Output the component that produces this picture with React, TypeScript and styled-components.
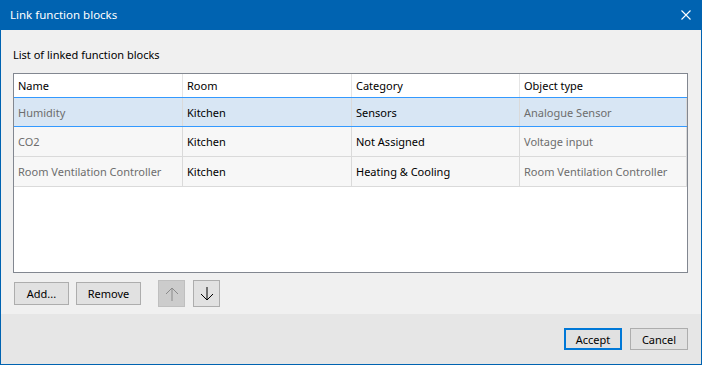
import React, { useState } from "react";
import styled, { createGlobalStyle } from "styled-components";

const GlobalStyle = createGlobalStyle`
  html, body {
    margin: 0;
    padding: 0;
    background: #ffffff;
  }
  body {
    font-family: "Noto Sans", "Open Sans", sans-serif;
    font-size: 11px;
  }
`;

type Block = {
  name: string;
  room: string;
  category: string;
  objectType: string;
};

const blocks: Block[] = [
  { name: "Humidity", room: "Kitchen", category: "Sensors", objectType: "Analogue Sensor" },
  { name: "CO2", room: "Kitchen", category: "Not Assigned", objectType: "Voltage input" },
  {
    name: "Room Ventilation Controller",
    room: "Kitchen",
    category: "Heating & Cooling",
    objectType: "Room Ventilation Controller",
  },
];

const columns = ["Name", "Room", "Category", "Object type"];

const App = () => {
  const [selected, setSelected] = useState<number>(0);

  return (
    <>
      <GlobalStyle />
      <Window>
        <TitleBar>
          <Title>Link function blocks</Title>
          <CloseBtn aria-label="Close">
            <svg width="10" height="10" viewBox="0 0 10 10">
              <path d="M0.5 0.5 L9.5 9.5 M9.5 0.5 L0.5 9.5" stroke="#ffffff" strokeWidth="1.1" />
            </svg>
          </CloseBtn>
        </TitleBar>
        <Body>
          <Label>List of linked function blocks</Label>
          <Table>
            <HeaderRow>
              {columns.map((c) => (
                <HeaderCell key={c}>{c}</HeaderCell>
              ))}
            </HeaderRow>
            {blocks.map((b, i) => (
              <Row key={b.name} selected={i === selected} onClick={() => setSelected(i)}>
                <Cell muted>{b.name}</Cell>
                <Cell>{b.room}</Cell>
                <Cell>{b.category}</Cell>
                <Cell muted>{b.objectType}</Cell>
              </Row>
            ))}
          </Table>
          <Toolbar>
            <TextBtn width={55}>Add...</TextBtn>
            <TextBtn width={65}>Remove</TextBtn>
            <ArrowGroup>
              <ArrowBtn disabled>
                <svg width="14" height="14" viewBox="0 0 14 14">
                  <path d="M7 1 V14 M1 7 L7 1 L13 7" stroke="#8a8a8a" strokeWidth="1" fill="none" />
                </svg>
              </ArrowBtn>
              <ArrowBtn>
                <svg width="14" height="14" viewBox="0 0 14 14">
                  <path d="M7 0 V13 M1 7 L7 13 L13 7" stroke="#000000" strokeWidth="1" fill="none" />
                </svg>
              </ArrowBtn>
            </ArrowGroup>
          </Toolbar>
        </Body>
        <Footer>
          <DialogBtn primary>Accept</DialogBtn>
          <DialogBtn>Cancel</DialogBtn>
        </Footer>
      </Window>
    </>
  );
};

const Window = styled.div`
  display: flex;
  flex-direction: column;
  width: 702px;
  height: 365px;
  box-sizing: border-box;
  border: 1px solid #0063b1;
  border-top: none;
  background: #f0f0f0;
  overflow: hidden;
`;

const TitleBar = styled.div`
  display: flex;
  align-items: center;
  justify-content: space-between;
  margin: 0 -1px;
  padding: 0 11px 0 10px;
  height: 30px;
  background: #0063b1;
  color: #ffffff;
`;

const Title = styled.div`
  font-size: 11.5px;
  line-height: 16px;
`;

const CloseBtn = styled.div`
  display: flex;
  align-items: center;
  justify-content: center;
  width: 10px;
  height: 10px;
`;

const Body = styled.div`
  display: flex;
  flex-direction: column;
  padding: 17px 13px 7px 12px;
`;

const Label = styled.div`
  height: 16px;
  line-height: 16px;
  color: #000000;
`;

const Table = styled.div`
  margin-top: 10px;
  height: 200px;
  box-sizing: border-box;
  border: 1px solid #828790;
  background: #ffffff;
`;

const gridCols = "169px 169px 168px 167px";

const HeaderRow = styled.div`
  display: grid;
  grid-template-columns: ${gridCols};
  height: 23px;
`;

const HeaderCell = styled.div`
  display: flex;
  align-items: center;
  padding-left: 4px;
  border-right: 1px solid #e5e5e5;
  color: #000000;
  &:last-child {
    border-right: none;
  }
`;

const Row = styled.div<{ selected?: boolean }>`
  display: grid;
  grid-template-columns: ${gridCols};
  height: 30px;
  box-sizing: border-box;
  border-top: ${(p) => (p.selected ? "1px solid #3399ff" : "none")};
  border-bottom: 1px solid ${(p) => (p.selected ? "#3399ff" : "#dadada")};
  background: ${(p) => (p.selected ? "#d8e6f4" : "#f7f7f7")};
`;

const Cell = styled.div<{ muted?: boolean }>`
  display: flex;
  align-items: center;
  padding-left: 4px;
  border-right: 1px solid #dadada;
  color: ${(p) => (p.muted ? "#6d6d6d" : "#000000")};
  white-space: nowrap;
  overflow: hidden;
`;

const Toolbar = styled.div`
  display: flex;
  align-items: center;
  gap: 7px;
  margin-top: 7px;
  padding-left: 1px;
  height: 27px;
`;

const TextBtn = styled.button<{ width: number }>`
  width: ${(p) => p.width}px;
  height: 23px;
  padding: 0;
  box-sizing: border-box;
  border: 1px solid #adadad;
  background: #e1e1e1;
  font-family: inherit;
  font-size: 11px;
  color: #000000;
`;

const ArrowGroup = styled.div`
  display: flex;
  gap: 8px;
  margin-left: 10px;
`;

const ArrowBtn = styled.button`
  display: flex;
  align-items: center;
  justify-content: center;
  width: 27px;
  height: 27px;
  padding: 0;
  box-sizing: border-box;
  border: 1px solid #adadad;
  background: #e1e1e1;
  &:disabled {
    border-color: #bfbfbf;
    background: #cccccc;
  }
`;

const Footer = styled.div`
  display: flex;
  justify-content: flex-end;
  gap: 8px;
  margin-top: auto;
  padding: 14px 13px 0 0;
  height: 50px;
  box-sizing: border-box;
  background: #e6e6e6;
`;

const DialogBtn = styled.button<{ primary?: boolean }>`
  width: 58px;
  height: 22px;
  padding: 0;
  box-sizing: border-box;
  border: ${(p) => (p.primary ? "2px solid #0078d7" : "1px solid #adadad")};
  background: #e1e1e1;
  font-family: inherit;
  font-size: 11px;
  color: #000000;
`;

export default App;
